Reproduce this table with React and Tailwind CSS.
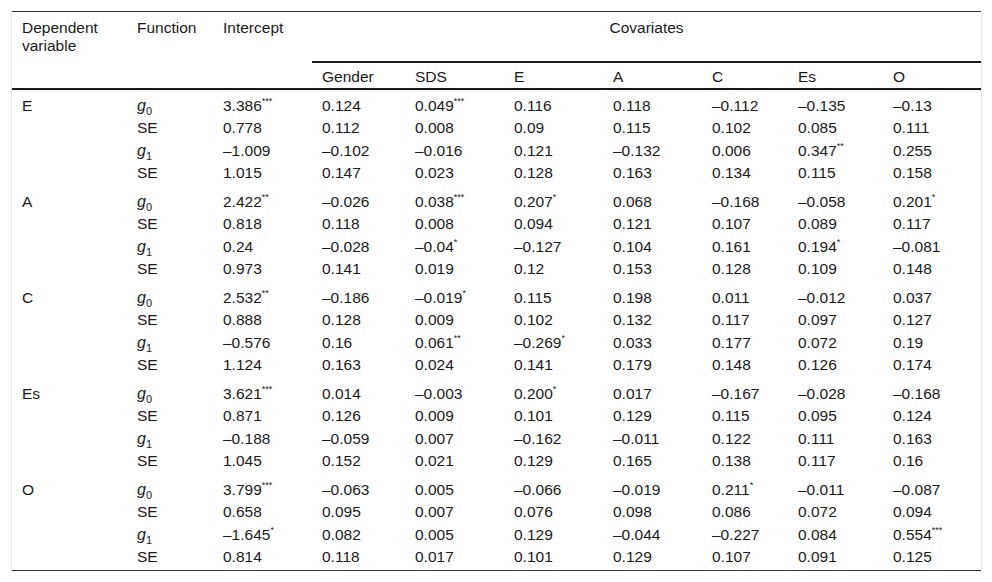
import React from 'react';

const covariates = ['Gender', 'SDS', 'E', 'A', 'C', 'Es', 'O'];

// each line: [intercept, gender, sds, e, a, c, es, o]
const groups = [
  {
    dv: 'E',
    lines: [
      ['3.386***', '0.124', '0.049***', '0.116', '0.118', '–0.112', '–0.135', '–0.13'],
      ['0.778', '0.112', '0.008', '0.09', '0.115', '0.102', '0.085', '0.111'],
      ['–1.009', '–0.102', '–0.016', '0.121', '–0.132', '0.006', '0.347**', '0.255'],
      ['1.015', '0.147', '0.023', '0.128', '0.163', '0.134', '0.115', '0.158'],
    ],
  },
  {
    dv: 'A',
    lines: [
      ['2.422**', '–0.026', '0.038***', '0.207*', '0.068', '–0.168', '–0.058', '0.201*'],
      ['0.818', '0.118', '0.008', '0.094', '0.121', '0.107', '0.089', '0.117'],
      ['0.24', '–0.028', '–0.04*', '–0.127', '0.104', '0.161', '0.194*', '–0.081'],
      ['0.973', '0.141', '0.019', '0.12', '0.153', '0.128', '0.109', '0.148'],
    ],
  },
  {
    dv: 'C',
    lines: [
      ['2.532**', '–0.186', '–0.019*', '0.115', '0.198', '0.011', '–0.012', '0.037'],
      ['0.888', '0.128', '0.009', '0.102', '0.132', '0.117', '0.097', '0.127'],
      ['–0.576', '0.16', '0.061**', '–0.269*', '0.033', '0.177', '0.072', '0.19'],
      ['1.124', '0.163', '0.024', '0.141', '0.179', '0.148', '0.126', '0.174'],
    ],
  },
  {
    dv: 'Es',
    lines: [
      ['3.621***', '0.014', '–0.003', '0.200*', '0.017', '–0.167', '–0.028', '–0.168'],
      ['0.871', '0.126', '0.009', '0.101', '0.129', '0.115', '0.095', '0.124'],
      ['–0.188', '–0.059', '0.007', '–0.162', '–0.011', '0.122', '0.111', '0.163'],
      ['1.045', '0.152', '0.021', '0.129', '0.165', '0.138', '0.117', '0.16'],
    ],
  },
  {
    dv: 'O',
    lines: [
      ['3.799***', '–0.063', '0.005', '–0.066', '–0.019', '0.211*', '–0.011', '–0.087'],
      ['0.658', '0.095', '0.007', '0.076', '0.098', '0.086', '0.072', '0.094'],
      ['–1.645*', '0.082', '0.005', '0.129', '–0.044', '–0.227', '0.084', '0.554***'],
      ['0.814', '0.118', '0.017', '0.101', '0.129', '0.107', '0.091', '0.125'],
    ],
  },
];

const widths = ['w-[115px]', 'w-[86px]', 'w-[99px]', 'w-[93px]', 'w-[99px]', 'w-[99px]', 'w-[99px]', 'w-[86px]', 'w-[95px]', 'w-[98px]'];

const Value = ({ v }) => {
  const m = v.match(/^([^*]+)(\*+)?$/);
  return (
    <span>
      {m[1]}
      {m[2] && <span className="relative -top-[7px] text-[9px] leading-none">{m[2]}</span>}
    </span>
  );
};

const G = ({ n }) => (
  <span>
    <i className="text-[16px]">g</i>
    <span className="relative top-[4px] text-[11px] leading-none">{n}</span>
  </span>
);

const Line = ({ children }) => <div className="h-[22.5px] leading-[22px] whitespace-nowrap">{children}</div>;

export default function App() {
  return (
    <div className="min-h-screen bg-white pt-[11px] pl-[11px] text-[#1a1a1a]" style={{ fontFamily: '"Liberation Sans", Arial, sans-serif' }}>
      <div className="w-[971px] border-x border-[#e6e6e6]">
        <table className="w-full table-fixed border-collapse text-[15.5px]">
          <colgroup>
            {widths.map((w, i) => (
              <col key={i} className={w} />
            ))}
          </colgroup>
          <thead>
            <tr className="border-t border-[#333]">
              <th rowSpan={2} className="border-b-2 border-[#1a1a1a] pl-[10px] pt-[7px] text-left align-top font-normal leading-[18px]">
                Dependent
                <br />
                variable
              </th>
              <th rowSpan={2} className="border-b-2 border-[#1a1a1a] pl-[10px] pt-[7px] text-left align-top font-normal leading-[18px]">
                Function
              </th>
              <th rowSpan={2} className="border-b-2 border-[#1a1a1a] pl-[10px] pt-[7px] text-left align-top font-normal leading-[18px]">
                Intercept
              </th>
              <th colSpan={7} className="h-[50px] border-b-2 border-[#1a1a1a] pt-[7px] text-center align-top font-normal leading-[18px]">
                Covariates
              </th>
            </tr>
            <tr>
              {covariates.map((c) => (
                <th key={c} className="h-[27px] border-b-2 border-[#1a1a1a] pl-[10px] pt-[3px] text-left align-middle font-normal leading-[18px]">
                  {c}
                </th>
              ))}
            </tr>
          </thead>
          <tbody>
            {groups.map((g, gi) => (
              <tr key={g.dv} className={gi === groups.length - 1 ? 'border-b border-[#333]' : ''}>
                <td className="pl-[10px] pt-[5px] pb-[1px] align-top">
                  <Line>{g.dv}</Line>
                </td>
                <td className="pl-[10px] pt-[5px] pb-[1px] align-top">
                  <Line>
                    <G n="0" />
                  </Line>
                  <Line>SE</Line>
                  <Line>
                    <G n="1" />
                  </Line>
                  <Line>SE</Line>
                </td>
                {g.lines[0].map((_, ci) => (
                  <td key={ci} className="pl-[10px] pt-[5px] pb-[1px] align-top">
                    {g.lines.map((line, li) => (
                      <Line key={li}>
                        <Value v={line[ci]} />
                      </Line>
                    ))}
                  </td>
                ))}
              </tr>
            ))}
          </tbody>
        </table>
      </div>
    </div>
  );
}
